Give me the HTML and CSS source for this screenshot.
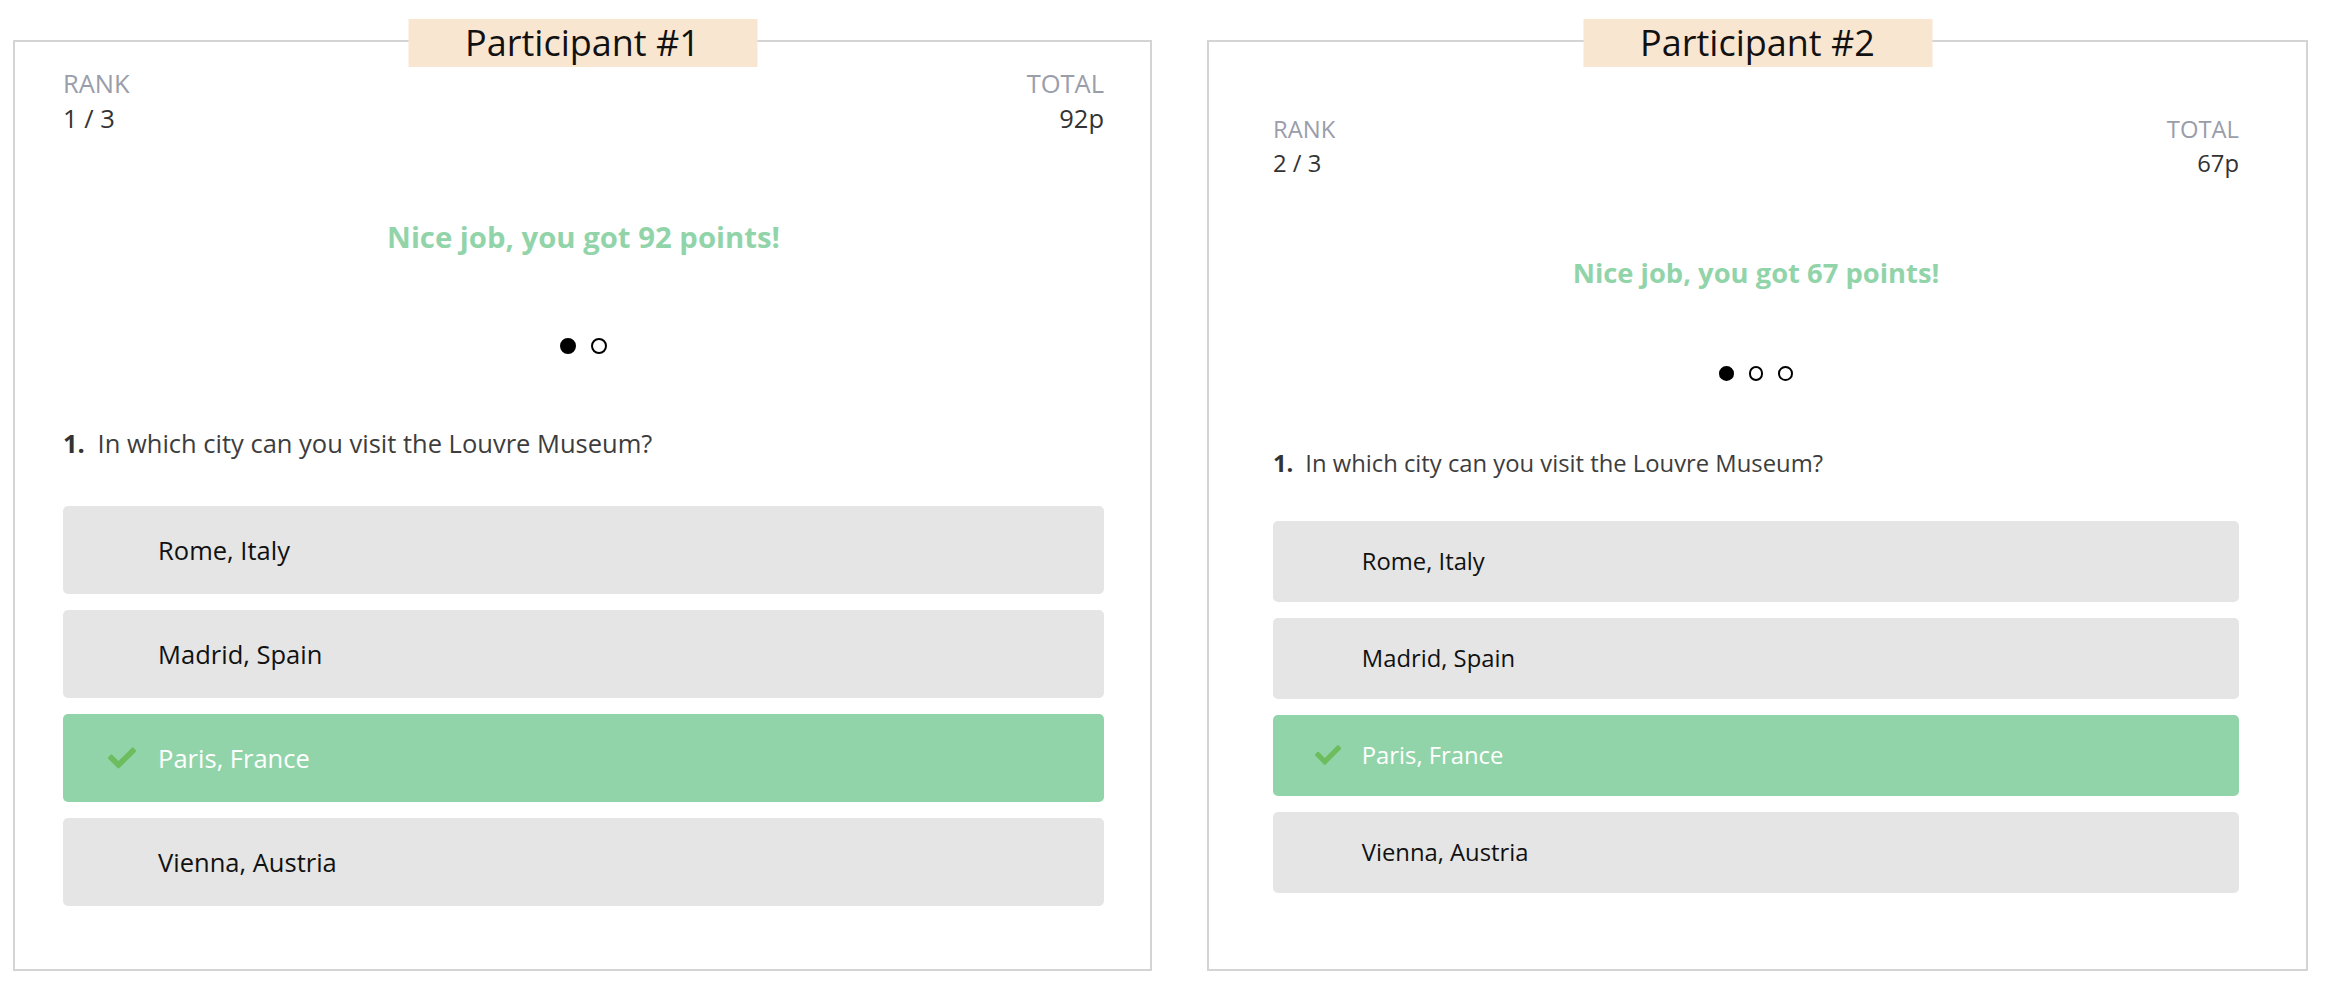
FILE: index.html
```html
<!DOCTYPE html>
<html lang="en">
<head>
<meta charset="utf-8">
<title>Participants</title>
<link rel="stylesheet" href="styles.css">
</head>
<body>
<main class="board">
  <section class="card card--one">
    <div class="card-label">Participant #1</div>
    <div class="stats">
      <div class="stat">
        <div class="stat-name">RANK</div>
        <div class="stat-value">1 / 3</div>
      </div>
      <div class="stat stat--right">
        <div class="stat-name">TOTAL</div>
        <div class="stat-value">92p</div>
      </div>
    </div>
    <p class="result">Nice job, you got 92 points!</p>
    <div class="dots">
      <span class="dot dot--on"></span>
      <span class="dot"></span>
    </div>
    <p class="question"><span class="q-num">1.</span>In which city can you visit the Louvre Museum?</p>
    <ul class="options">
      <li class="option">Rome, Italy</li>
      <li class="option">Madrid, Spain</li>
      <li class="option option--correct"><svg class="check" viewBox="0 0 512 512" aria-hidden="true"><path d="M173.898 439.404l-166.4-166.4c-9.997-9.997-9.997-26.206 0-36.204l36.203-36.204c9.997-9.998 26.207-9.998 36.204 0L192 312.690 432.095 72.596c9.997-9.997 26.207-9.997 36.204 0l36.203 36.204c9.997 9.997 9.997 26.206 0 36.204l-294.4 294.401c-9.998 9.997-26.207 9.997-36.204-.001z"/></svg>Paris, France</li>
      <li class="option">Vienna, Austria</li>
    </ul>
  </section>

  <section class="card card--two">
    <div class="card-label">Participant #2</div>
    <div class="stats">
      <div class="stat">
        <div class="stat-name">RANK</div>
        <div class="stat-value">2 / 3</div>
      </div>
      <div class="stat stat--right">
        <div class="stat-name">TOTAL</div>
        <div class="stat-value">67p</div>
      </div>
    </div>
    <p class="result">Nice job, you got 67 points!</p>
    <div class="dots">
      <span class="dot dot--on"></span>
      <span class="dot"></span>
      <span class="dot"></span>
    </div>
    <p class="question"><span class="q-num">1.</span>In which city can you visit the Louvre Museum?</p>
    <ul class="options">
      <li class="option">Rome, Italy</li>
      <li class="option">Madrid, Spain</li>
      <li class="option option--correct"><svg class="check" viewBox="0 0 512 512" aria-hidden="true"><path d="M173.898 439.404l-166.4-166.4c-9.997-9.997-9.997-26.206 0-36.204l36.203-36.204c9.997-9.998 26.207-9.998 36.204 0L192 312.690 432.095 72.596c9.997-9.997 26.207-9.997 36.204 0l36.203 36.204c9.997 9.997 9.997 26.206 0 36.204l-294.4 294.401c-9.998 9.997-26.207 9.997-36.204-.001z"/></svg>Paris, France</li>
      <li class="option">Vienna, Austria</li>
    </ul>
  </section>
</main>
</body>
</html>
```

FILE: styles.css
```css
* {
  box-sizing: border-box;
}

html, body {
  margin: 0;
  padding: 0;
  background: #ffffff;
}

body {
  font-family: "Open Sans", "Noto Sans", "Liberation Sans", sans-serif;
  color: #333333;
}

.board {
  display: flex;
  gap: 55px;
  padding: 40px 24px 0 13px;
}

.card {
  position: relative;
  display: flex;
  flex-direction: column;
  height: 931px;
  border: 2px solid #d4d4d4;
  background: #ffffff;
}

.card--one {
  width: 1139px;
  font-size: 25.5px;
  padding: 24px 46px 0 48px;
  --lh: 35px;
  --res-lh: 40px;
  --res-gap: 81px;
  --dots-gap: 81px;
  --q-gap: 72px;
  --opt-gap: 45px;
  --opt-h: 88px;
}

.card--two {
  width: 1101px;
  font-size: 23.8px;
  padding: 70px 67px 0 64px;
  --lh: 34px;
  --res-lh: 37px;
  --res-gap: 74px;
  --dots-gap: 75px;
  --q-gap: 65px;
  --opt-gap: 41px;
  --opt-h: 81px;
}

.card-label {
  position: absolute;
  top: -23px;
  left: 50%;
  transform: translateX(-50%);
  width: 349px;
  height: 48px;
  display: flex;
  align-items: center;
  justify-content: center;
  background: #f9e6d1;
  color: #111111;
  font-size: 36px;
  line-height: 48px;
  white-space: nowrap;
}

.stats {
  display: flex;
  justify-content: space-between;
  line-height: var(--lh);
}

.stat--right {
  text-align: right;
}

.stat-name {
  color: #9a9daa;
}

.stat-value {
  color: #333333;
}

.result {
  margin: var(--res-gap) 0 0;
  text-align: center;
  font-weight: 700;
  font-size: 1.15em;
  line-height: var(--res-lh);
  color: #92d4a9;
}

.dots {
  display: flex;
  justify-content: center;
  gap: 0.62em;
  margin-top: var(--dots-gap);
}

.dot {
  width: 0.62em;
  height: 0.62em;
  border-radius: 50%;
  border: 0.11em solid #000000;
  background: #ffffff;
}

.dot--on {
  background: #000000;
}

.question {
  margin: var(--q-gap) 0 0;
  line-height: var(--lh);
  color: #3d3d3d;
}

.q-num {
  font-weight: 700;
  color: #333333;
  margin-right: 0.5em;
}

.options {
  list-style: none;
  margin: var(--opt-gap) 0 0;
  padding: 0;
  display: flex;
  flex-direction: column;
  gap: 16px;
}

.option {
  position: relative;
  display: flex;
  align-items: center;
  height: var(--opt-h);
  padding-left: 3.73em;
  border-radius: 5px;
  background: #e5e5e5;
  color: #111111;
}

.option--correct {
  background: #92d4a9;
  color: #ffffff;
}

.check {
  position: absolute;
  left: 1.76em;
  top: 50%;
  width: 1.1em;
  height: 1.1em;
  transform: translateY(-50%);
  fill: #6dbd5e;
}
```
